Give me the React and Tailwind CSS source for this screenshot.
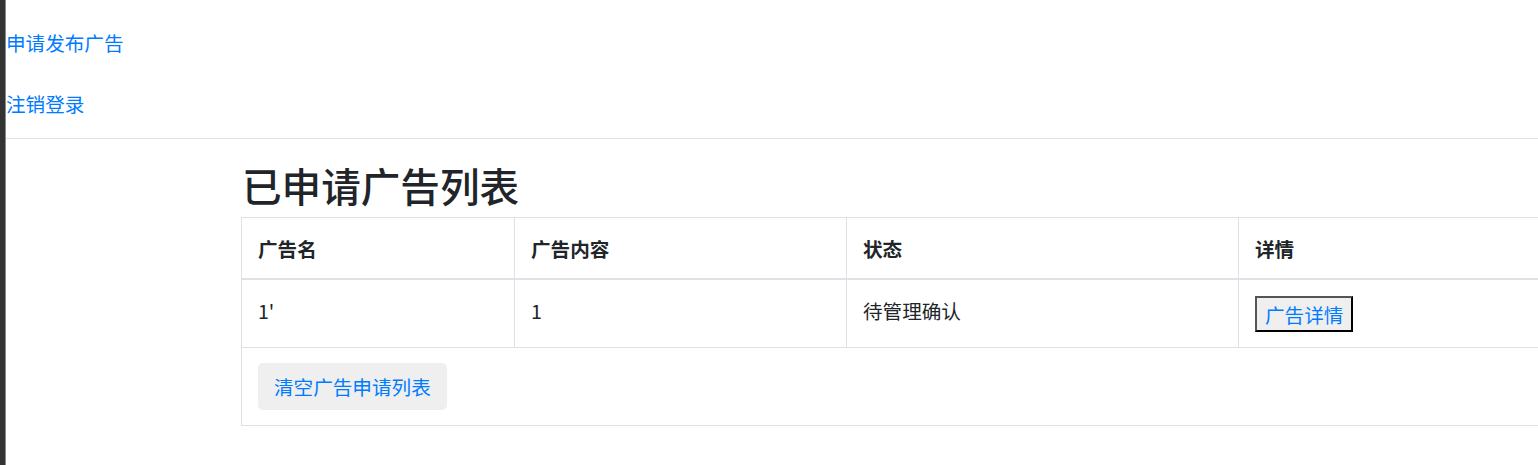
import React from 'react';

const rows = [{ name: "1'", content: '1', status: '待管理确认' }];

const App = () => {
  return (
    <div className="flex min-h-[465px] w-full overflow-hidden bg-white text-[#212529] font-['Noto_Sans_CJK_SC','Noto_Sans',sans-serif]">
      <div className="w-[6px] shrink-0 bg-[#333] border-r border-[#8a8a8a]"></div>
      <div className="flex-1 min-w-0">
        <div className="pt-[12px]">
          <a href="#" className="flex h-[61px] items-center text-[19.6px] text-[#007bff] no-underline">申请发布广告</a>
          <a href="#" className="flex h-[61px] items-center text-[19.6px] text-[#007bff] no-underline">注销登录</a>
        </div>
        <hr className="mt-[4px] border-0 border-t border-[#e2e2e2]" />
        <div className="ml-[235px]">
          <h2 className="mt-[22px] mb-[8px] text-[39.6px] leading-[48px] font-medium pl-[1px]">已申请广告列表</h2>
          <table className="w-[1400px] border-collapse border border-[#dee2e6] text-[19.6px] leading-[29px]">
            <thead>
              <tr>
                <th className="w-[273px] border border-[#dee2e6] border-b-2 px-4 pt-4 pb-[15px] text-left align-top font-bold">广告名</th>
                <th className="w-[332px] border border-[#dee2e6] border-b-2 px-4 pt-4 pb-[15px] text-left align-top font-bold">广告内容</th>
                <th className="w-[392px] border border-[#dee2e6] border-b-2 px-4 pt-4 pb-[15px] text-left align-top font-bold">状态</th>
                <th className="border border-[#dee2e6] border-b-2 px-4 pt-4 pb-[15px] text-left align-top font-bold">详情</th>
              </tr>
            </thead>
            <tbody>
              {rows.map((r, i) => (
                <tr key={i}>
                  <td className="border border-[#dee2e6] px-4 py-4 align-top">{r.name}</td>
                  <td className="border border-[#dee2e6] px-4 py-4 align-top">{r.content}</td>
                  <td className="border border-[#dee2e6] px-4 py-4 align-top">{r.status}</td>
                  <td className="border border-[#dee2e6] px-4 pt-4 pb-[15px] align-top">
                    <button className="block h-[36px] px-[8px] bg-[#efefef] text-[#007bff] text-[19.6px] leading-[29px] border-2 border-t-[#555] border-l-[#555] border-r-black border-b-black">广告详情</button>
                  </td>
                </tr>
              ))}
              <tr>
                <td colSpan={4} className="border border-[#dee2e6] px-4 py-[15px] align-top">
                  <button className="block h-[47px] px-[16px] rounded-[5px] bg-[#efefef] text-[#007bff] text-[19.6px]">清空广告申请列表</button>
                </td>
              </tr>
            </tbody>
          </table>
        </div>
      </div>
    </div>
  );
};

export default App;
